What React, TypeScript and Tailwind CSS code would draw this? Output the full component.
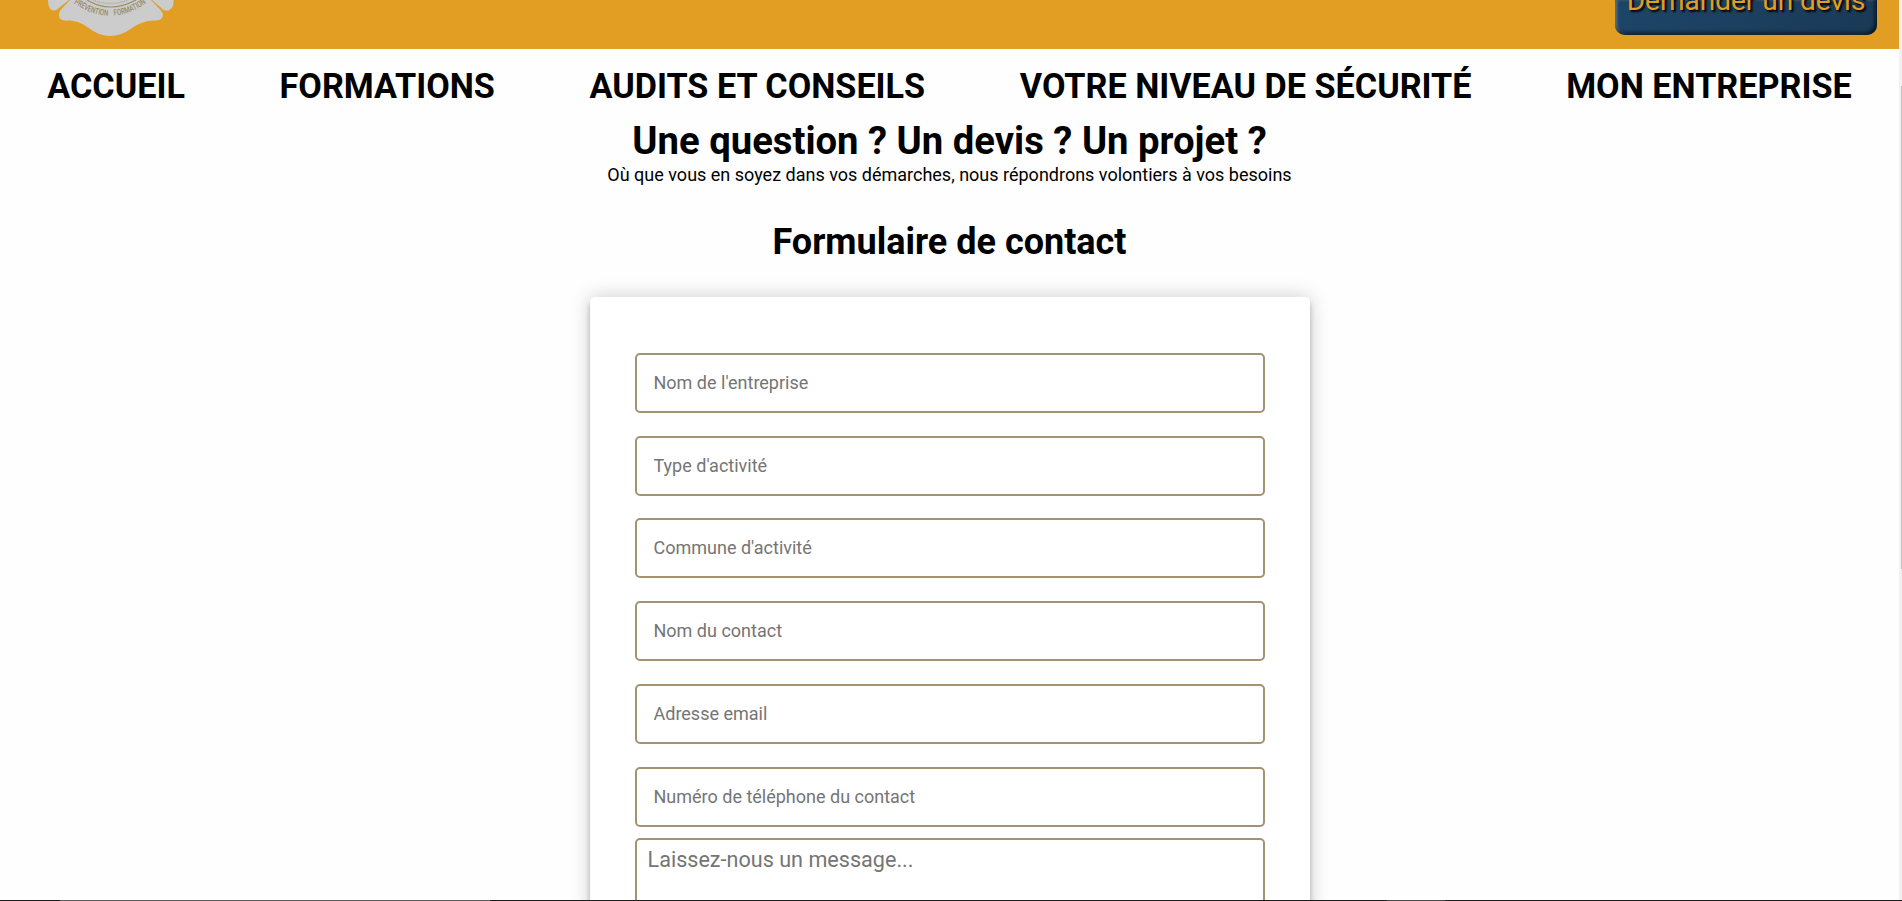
const nav = ['ACCUEIL', 'FORMATIONS', 'AUDITS ET CONSEILS', 'VOTRE NIVEAU DE SÉCURITÉ', 'MON ENTREPRISE'];
const fields = ["Nom de l'entreprise", "Type d'activité", "Commune d'activité", 'Nom du contact', 'Adresse email', 'Numéro de téléphone du contact'];

function Logo() {
  return (
    <svg className="h-[37px] w-[142px] shrink-0" viewBox="40 0 142 37">
      <defs>
        <path id="motto" d="M73 2.500 Q110 29 147 2.500" />
      </defs>
      <g fill="#cccccc">
        <path d="M48 0 L69 0 L57 9.500 Q54 11.500 51 9.500 Q48 7 48 0Z" />
        <path d="M152 0 L173.500 0 Q174 7 170 9.500 Q167 12 163 9.500Z" />
        <path d="M70 0 L60.500 10 Q57 16 61 19.500 Q63 21 70 20.500 Q79 21 88 27.500 Q99 36 110 36 Q121 36 132 28 Q142 21 152 20.500 Q159 21 161.500 18.500 Q164.500 15 161 10.500 L151 0Z" />
      </g>
      <path d="M87 0 Q110 14 136 0" fill="none" stroke="#9c8f62" strokeWidth="1.2" />
      <path d="M93 0 Q110 7 128 0" fill="none" stroke="#aaa798" strokeWidth="1.5" strokeDasharray="1 1" />
      <g fill="#968b68" fontSize="8.5" fontFamily="Roboto" fontWeight="500">
        <text textLength="37" lengthAdjust="spacingAndGlyphs">
          <textPath href="#motto" startOffset="1" textLength="37" lengthAdjust="spacingAndGlyphs">PRÉVENTION</textPath>
        </text>
        <text textLength="35" lengthAdjust="spacingAndGlyphs">
          <textPath href="#motto" startOffset="44" textLength="35" lengthAdjust="spacingAndGlyphs">FORMATION</textPath>
        </text>
      </g>
    </svg>
  );
}

export default function App() {
  return (
    <div className="flex h-[901px] w-full flex-col overflow-hidden bg-[#fefefe] font-[Roboto,sans-serif] text-black">
      <div className="flex min-h-0 flex-1">
        <main className="flex min-w-0 flex-1 flex-col overflow-hidden">
          <header className="flex h-[49px] shrink-0 items-start justify-between bg-[#e19e22] pr-[22px] pl-10">
            <Logo />
            <button className="flex h-[35px] w-[262px] items-end justify-center rounded-b-[10px] bg-linear-to-r from-[#1d4568] to-[#1a3a57] pb-5 text-[28px] leading-none whitespace-nowrap text-[#e19e22] shadow-[inset_-2px_-2px_4px_#081521,inset_2px_0_3px_rgba(160,170,170,0.6)] [text-shadow:2px_2px_2px_#000]">
              Demander un devis
            </button>
          </header>
          <nav className="flex h-[74px] shrink-0 items-center justify-around pt-px text-[34.2px] leading-none font-bold">
            {nav.map((label) => (
              <a key={label}>{label}</a>
            ))}
          </nav>
          <section className="flex flex-1 flex-col items-center">
            <h1 className="-mt-0.5 mb-0.5 text-[38.25px] leading-[40px] font-bold">Une question ? Un devis ? Un projet ?</h1>
            <p className="text-[18px] leading-6">Où que vous en soyez dans vos démarches, nous répondrons volontiers à vos besoins</p>
            <h2 className="mt-[33px] text-[36px] leading-[44px] font-bold">Formulaire de contact</h2>
            <form className="mt-[33px] flex h-[800px] w-[720px] shrink-0 flex-col rounded-[5px] bg-white px-[45px] pt-[55.9px] shadow-[0_0_20px_0_rgba(0,0,0,0.2),0_5px_5px_0_rgba(0,0,0,0.24)]">
              <div className="flex flex-col gap-[22.8px]">
                {fields.map((f) => (
                  <input key={f} placeholder={f} className="h-[60px] w-full rounded-[5px] border-2 border-[#a39371] px-[17px] pb-px text-[18px] placeholder:text-[#757575]" />
                ))}
              </div>
              <textarea placeholder="Laissez-nous un message..." className="mt-[11.1px] h-[200px] w-full resize-none rounded-[5px] border-2 border-[#a39371] px-[11px] py-[7px] text-[21.6px] leading-[26px] placeholder:text-[#757575]" />
            </form>
          </section>
        </main>
        <aside className="flex w-[3px] shrink-0 flex-col items-end bg-[#f1f1f1] pt-[86px]">
          <div className="h-[483px] w-px bg-[#c1c1c1]" />
        </aside>
      </div>
      <footer className="flex h-px shrink-0 bg-[#1c1c1c]">
        <div className="ml-[60px] w-[430px] bg-[#5c5c5c]" />
        <div className="ml-[897px] w-[58px] bg-[#4a4a4a]" />
      </footer>
    </div>
  );
}
